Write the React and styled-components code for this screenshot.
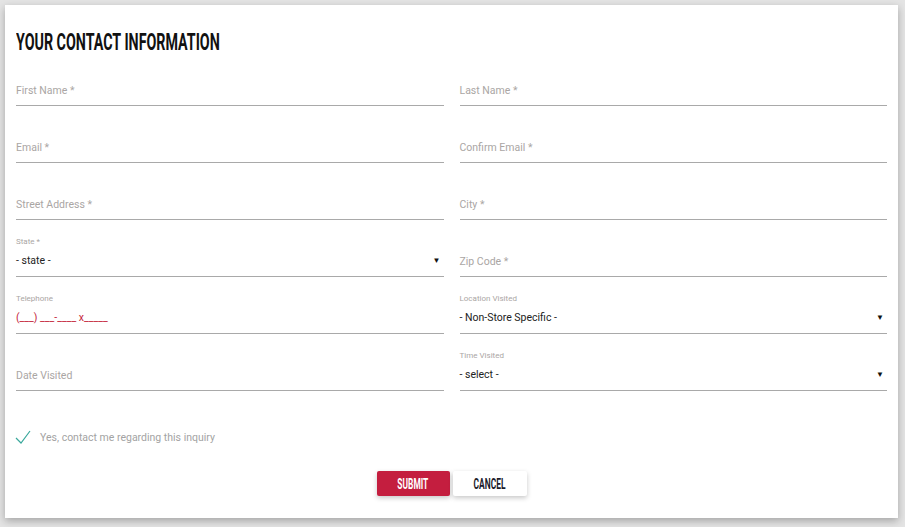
import React from "react"
import styled, { createGlobalStyle } from "styled-components"

const GlobalStyle = createGlobalStyle`
  html, body {
    margin: 0;
    padding: 0;
    background: #e4e4e4;
  }
  body {
    font-family: Roboto, "Liberation Sans", sans-serif;
  }
`

const Page = styled.div`
  padding: 5px 7px 9px 5px;
`

const Card = styled.form`
  background: #fff;
  box-shadow: 0 3px 8px rgba(0, 0, 0, 0.28);
  padding: 25px 11px 22px 11px;
  height: 513px;
  box-sizing: border-box;
`

const Condensed = styled.span`
  display: inline-block;
  font-family: Roboto, "Liberation Sans", sans-serif;
  font-weight: 700;
  transform: scaleX(${(p) => p.$scale || 0.6});
  transform-origin: ${(p) => p.$origin || "left"} center;
  white-space: nowrap;
`

const Title = styled.h2`
  margin: 0 0 2px;
  font-size: 24px;
  line-height: 24px;
  height: 24px;
  color: #111;
  font-weight: 700;
`

const Grid = styled.div`
  display: grid;
  grid-template-columns: 1fr 1fr;
  column-gap: 16px;
  row-gap: 7px;
`

const Field = styled.div`
  height: 50px;
  box-sizing: border-box;
  border-bottom: 1px solid #a9a9a9;
  display: flex;
  flex-direction: column;
  justify-content: flex-end;
  padding-bottom: ${(p) => (p.$small ? "9px" : "8px")};
`

const Placeholder = styled.div`
  font-size: 10.5px;
  line-height: 13px;
  color: #aaa6a4;
`

const SmallLabel = styled.div`
  font-size: 8px;
  line-height: 10px;
  color: #aaa6a4;
  margin-bottom: 7px;
`

const ValueRow = styled.div`
  display: flex;
  align-items: center;
  justify-content: space-between;
  font-size: 10.5px;
  line-height: 13px;
  color: ${(p) => (p.$mask ? "#c41e3a" : "#222")};
  padding-right: 3px;
`

const Arrow = styled.span`
  font-size: 8px;
  color: #111;
`

const CheckRow = styled.label`
  display: flex;
  align-items: center;
  gap: 9px;
  margin: 39px 0 0 -1px;
  font-size: 10.5px;
  color: #a3a3a3;
`

const Actions = styled.div`
  display: flex;
  justify-content: center;
  gap: 3px;
  margin-top: 27px;
`

const Button = styled.button`
  width: ${(p) => (p.$primary ? "73px" : "74px")};
  height: 25px;
  border: none;
  border-radius: 2px;
  padding: 0;
  font-size: 14px;
  color: ${(p) => (p.$primary ? "#fff" : "#1a1a2a")};
  background: ${(p) => (p.$primary ? "#c41e3f" : "#fff")};
  box-shadow: 0 2px 5px rgba(0, 0, 0, 0.22);
  cursor: pointer;
  overflow: hidden;
`

function TextField({ label }) {
  return (
    <Field>
      <Placeholder>{label}</Placeholder>
    </Field>
  )
}

function SelectField({ label, value, mask }) {
  return (
    <Field $small>
      <SmallLabel>{label}</SmallLabel>
      <ValueRow $mask={mask}>
        <span>{value}</span>
        {!mask && <Arrow>▼</Arrow>}
      </ValueRow>
    </Field>
  )
}

export default function App() {
  return (
    <>
      <GlobalStyle />
      <Page>
        <Card>
          <Title>
            <Condensed $scale={0.595}>YOUR CONTACT INFORMATION</Condensed>
          </Title>
          <Grid>
            <TextField label="First Name *" />
            <TextField label="Last Name *" />
            <TextField label="Email *" />
            <TextField label="Confirm Email *" />
            <TextField label="Street Address *" />
            <TextField label="City *" />
            <SelectField label="State *" value="- state -" />
            <TextField label="Zip Code *" />
            <SelectField label="Telephone" value="(___) ___-____ x_____" mask />
            <SelectField label="Location Visited" value="- Non-Store Specific -" />
            <TextField label="Date Visited" />
            <SelectField label="Time Visited" value="- select -" />
          </Grid>
          <CheckRow>
            <svg width="16" height="14" viewBox="0 0 16 14">
              <path d="M1 8 L6 13 L15 1" fill="none" stroke="#3aa89c" strokeWidth="1.2" />
            </svg>
            Yes, contact me regarding this inquiry
          </CheckRow>
          <Actions>
            <Button type="button" $primary>
              <Condensed $scale={0.6} $origin="center">SUBMIT</Condensed>
            </Button>
            <Button type="button">
              <Condensed $scale={0.6} $origin="center">CANCEL</Condensed>
            </Button>
          </Actions>
        </Card>
      </Page>
    </>
  )
}
